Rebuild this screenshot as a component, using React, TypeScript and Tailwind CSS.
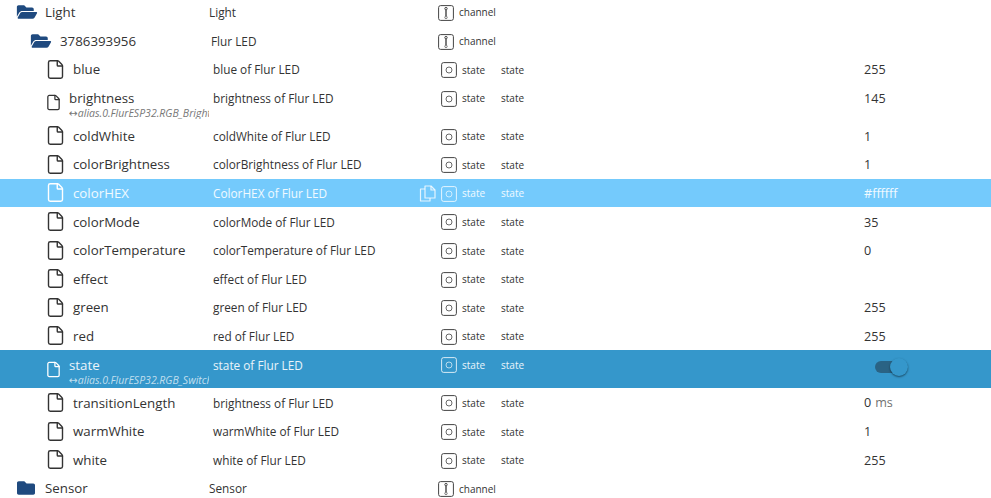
import React from 'react';
import { FaFolder, FaFolderOpen } from 'react-icons/fa';
import { File } from 'lucide-react';

type RowData = {
  name: string;
  title: string;
  value?: string;
  unit?: string;
  alias?: string;
  kind?: 'state' | 'channel';
  level?: number;
  open?: boolean;
  mode?: 'hover' | 'selected';
  toggle?: boolean;
};

const rows: RowData[] = [
  { name: 'Light', title: 'Light', kind: 'channel', level: 0, open: true },
  { name: '3786393956', title: 'Flur LED', kind: 'channel', level: 1, open: true },
  { name: 'blue', title: 'blue of Flur LED', value: '255' },
  { name: 'brightness', title: 'brightness of Flur LED', value: '145', alias: 'alias.0.FlurESP32.RGB_Brightness' },
  { name: 'coldWhite', title: 'coldWhite of Flur LED', value: '1' },
  { name: 'colorBrightness', title: 'colorBrightness of Flur LED', value: '1' },
  { name: 'colorHEX', title: 'ColorHEX of Flur LED', value: '#ffffff', mode: 'hover' },
  { name: 'colorMode', title: 'colorMode of Flur LED', value: '35' },
  { name: 'colorTemperature', title: 'colorTemperature of Flur LED', value: '0' },
  { name: 'effect', title: 'effect of Flur LED' },
  { name: 'green', title: 'green of Flur LED', value: '255' },
  { name: 'red', title: 'red of Flur LED', value: '255' },
  { name: 'state', title: 'state of Flur LED', alias: 'alias.0.FlurESP32.RGB_Switch', mode: 'selected', toggle: true },
  { name: 'transitionLength', title: 'brightness of Flur LED', value: '0', unit: 'ms' },
  { name: 'warmWhite', title: 'warmWhite of Flur LED', value: '1' },
  { name: 'white', title: 'white of Flur LED', value: '255' },
  { name: 'Sensor', title: 'Sensor', kind: 'channel', level: 0 },
];

function ChannelIcon({ className }: { className: string }) {
  return (
    <svg viewBox="0 0 16 16" className={className} fill="none" stroke="currentColor">
      <rect x="0.6" y="0.6" width="14.8" height="14.8" rx="2" strokeWidth="1" />
      <circle cx="8" cy="3.6" r="1.2" strokeWidth="1" />
      <circle cx="8" cy="12.4" r="1.2" strokeWidth="1" opacity="0.7" />
      <path d="M8 5v6" strokeWidth="1.4" />
    </svg>
  );
}

function StateIcon({ className }: { className: string }) {
  return (
    <svg viewBox="0 0 16 16" className={className} fill="none" stroke="currentColor">
      <rect x="0.6" y="0.6" width="14.8" height="14.8" rx="2" strokeWidth="1" />
      <circle cx="8" cy="8" r="3" strokeWidth="1" opacity="0.8" />
    </svg>
  );
}

function CopyIcon() {
  return (
    <svg viewBox="0 0 17 17" className="w-[17px] h-[17px] text-white/80" fill="none" stroke="currentColor" strokeWidth="1.2">
      <path d="M6 1h6l4 4v8H6z" strokeLinejoin="round" />
      <path d="M12 1v4h4" strokeLinejoin="round" />
      <path d="M6 4H1.5v12H11v-3" strokeLinejoin="round" />
    </svg>
  );
}

function Row({ row }: { row: RowData }) {
  const isFolder = row.kind === 'channel';
  const level = row.level ?? 0;
  const light = !!row.mode;
  const bg =
    row.mode === 'hover' ? 'bg-[#74cafc] text-white/90' : row.mode === 'selected' ? 'bg-[#3597cb] text-white/90' : 'text-[#333]';
  const height = row.alias ? 'h-[38px]' : 'h-[28.6px]';
  const cell = 'h-[28.6px] flex items-center shrink-0 pt-[2px]';

  return (
    <div className={`flex items-start ${height} ${bg}`}>
      <div className={`flex self-stretch items-center shrink-0 overflow-hidden ${isFolder ? (level === 0 ? 'w-[209px] pl-4' : 'w-[211px] pl-[30px]') : row.alias ? 'w-[209px] mr-1 pl-[45px]' : 'w-[209px] mr-1 pl-[44.5px]'}`}>
        {isFolder ? (
          row.open ? (
            <FaFolderOpen className="w-[22px] h-[18px] shrink-0 text-[#1f4a7f]" />
          ) : (
            <FaFolder className="w-[20px] h-[18px] mr-[2px] shrink-0 text-[#1f4a7f]" />
          )
        ) : (
          <File
            strokeWidth={row.alias ? 1.8 : 1.6}
            className={`shrink-0 ${row.alias ? 'w-[17px] h-[17px]' : 'w-[21px] h-[21px]'} ${light ? 'text-white' : 'text-[#333]'}`}
          />
        )}
        <div className={`min-w-0 flex-1 self-start ${row.alias ? 'ml-[7px] pt-[5.5px]' : isFolder && level === 0 ? 'ml-[7px] pt-[5.5px]' : isFolder ? 'ml-2 pt-[5.5px]' : 'ml-[7.5px] pt-[5.5px]'}`}>
          <div className="text-[13.3px] leading-[18px] whitespace-nowrap">{row.name}</div>
          {row.alias && (
            <div className={`text-[10.5px] leading-3 italic whitespace-nowrap overflow-hidden ${light ? 'text-white/70' : 'text-[#777]'}`}>
              <span className="font-['DejaVu_Sans',sans-serif] not-italic">↔</span>
              {row.alias}
            </div>
          )}
        </div>
      </div>
      <div className={`${cell} text-[11.8px] whitespace-nowrap ${isFolder ? (level === 0 ? 'w-[229px]' : 'w-[227px]') : 'w-[206px]'}`}>
        {row.title}
      </div>
      {!isFolder && (
        <div className={`${cell} w-[22px]`}>{row.mode === 'hover' && <CopyIcon />}</div>
      )}
      <div className={cell}>
        {isFolder ? (
          <ChannelIcon className="w-4 h-4 text-[#444]" />
        ) : (
          <StateIcon className={`w-4 h-4 ${light ? 'text-white/80' : 'text-[#444]'}`} />
        )}
      </div>
      <div className={`${cell} w-[44px] pl-[5px] text-[10px]`}>{isFolder ? 'channel' : 'state'}</div>
      {!isFolder && <div className={`${cell} w-[363px] text-[10px]`}>state</div>}
      {row.value && (
        <div className="h-[28.6px] flex items-center shrink-0 pt-[3px] text-[12.6px] whitespace-nowrap">
          {row.value}
          {row.unit && <span className="ml-1 opacity-70">{row.unit}</span>}
        </div>
      )}
      {row.toggle && (
        <div className={`${cell} mt-[2px]`}>
          <div className="relative ml-[11px] w-[33px] h-3 rounded-full bg-[#2a6384]">
            <div className="absolute right-0 -top-[3px] w-[18px] h-[18px] rounded-full bg-[#3597cb] shadow-[0_1px_2px_rgba(0,0,0,0.5)]" />
          </div>
        </div>
      )}
    </div>
  );
}

export default function App() {
  return (
    <div className="w-[991px] h-[498px] overflow-hidden bg-white font-['Open_Sans',sans-serif]">
      <div className="-mt-[2.4px]">
        {rows.map((row) => (
          <Row key={row.name} row={row} />
        ))}
      </div>
    </div>
  );
}
